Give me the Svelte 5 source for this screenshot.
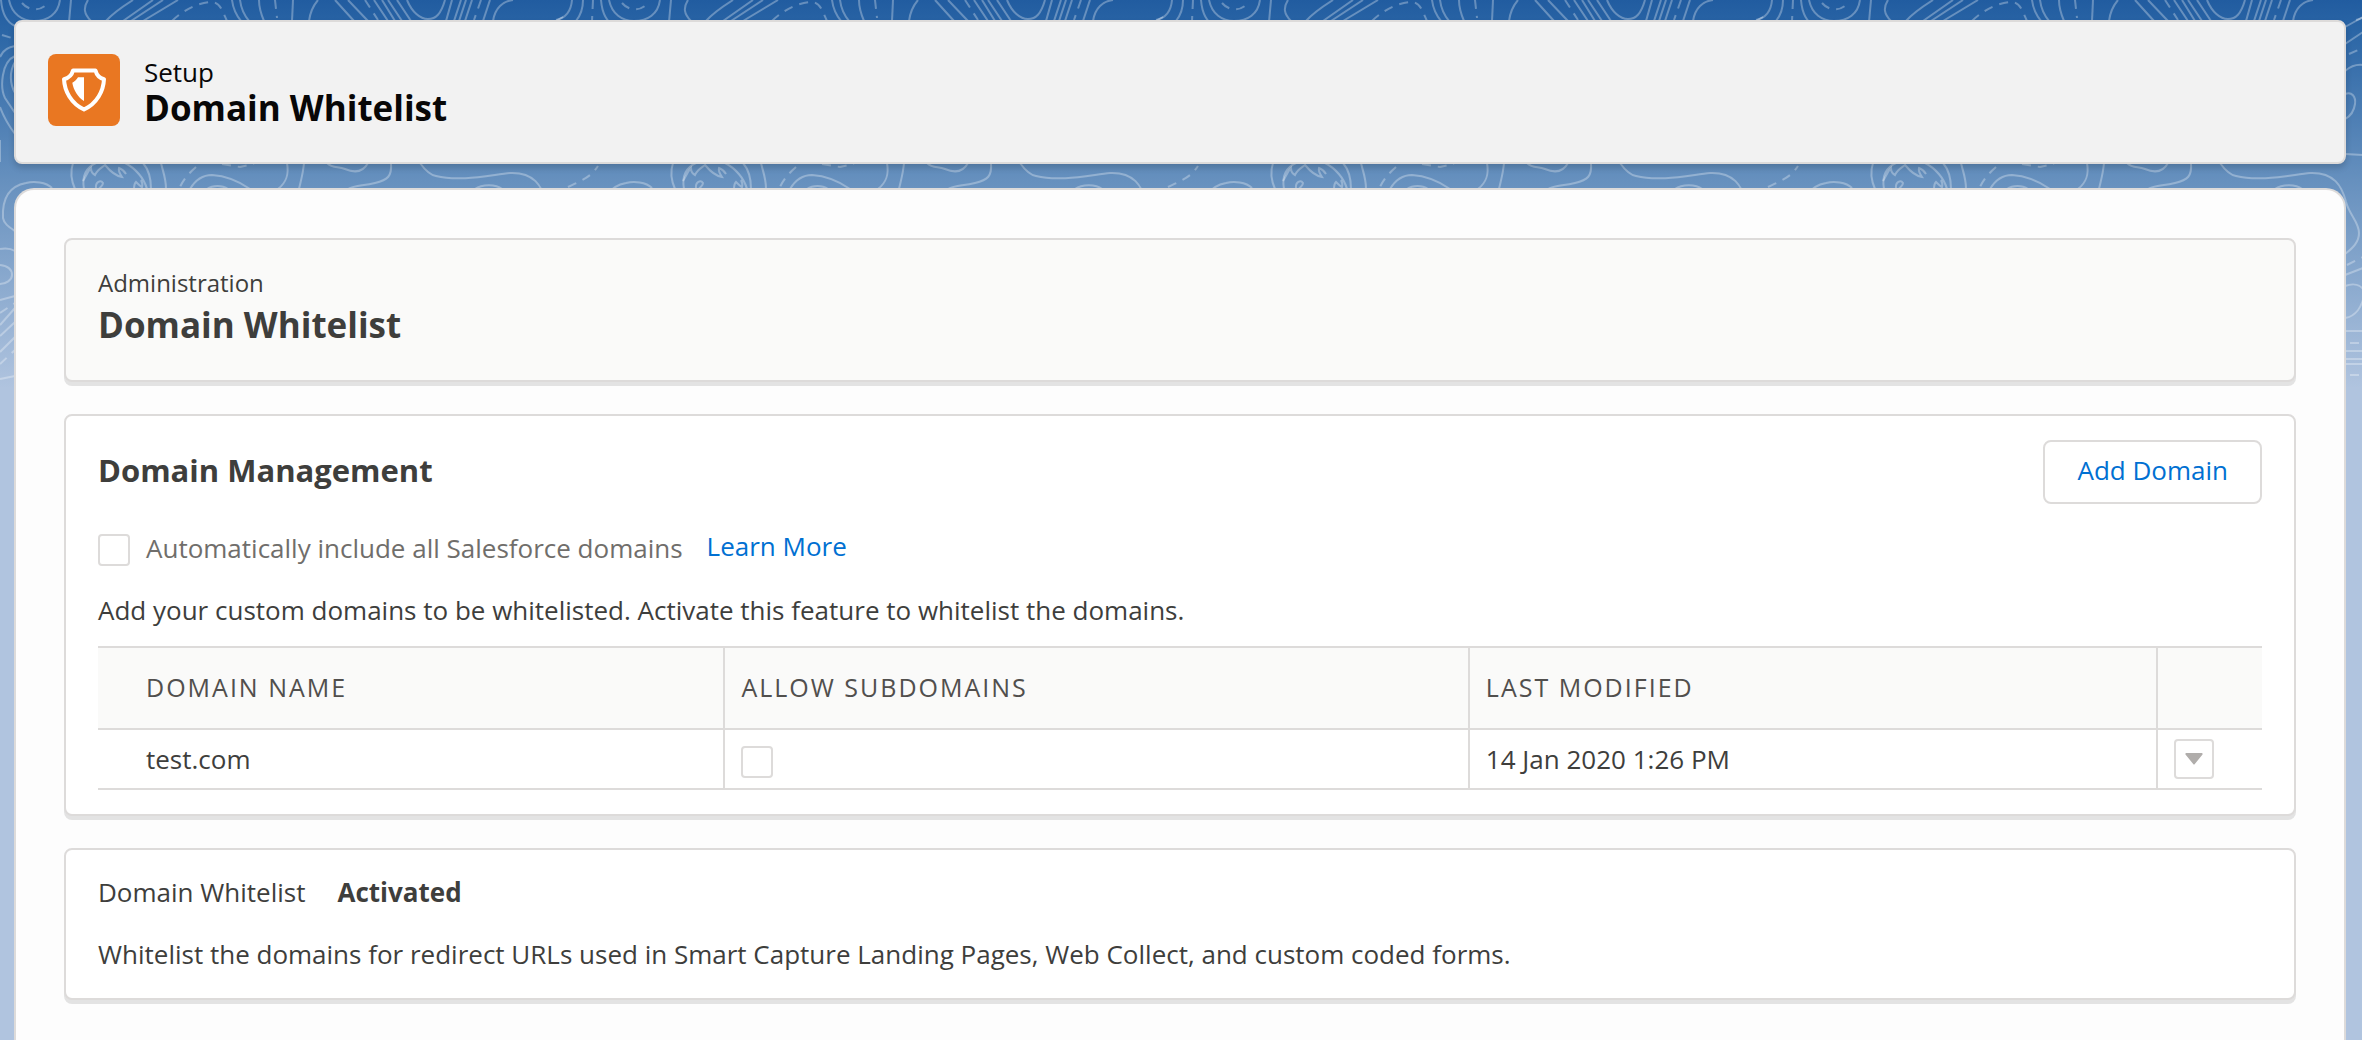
<script>
    let includeSalesforce = false;

    const columns = ['Domain Name', 'Allow Subdomains', 'Last Modified'];

    let domains = [
        { name: 'test.com', subdomains: false, modified: '14 Jan 2020 1:26 PM' }
    ];

    // Contour lines of the page backdrop, one 600px wide tile
    const contours = [
        'M1 0 C2 12 6 22 15 26',
        'M9 0 C12 14 22 21 34 21 C48 21 58 14 60 0',
        'M71 0 L69 22',
        'M88 0 C83 8 84 14 91 21',
        'M133 0 C122 7 114 12 106 21',
        'M153 0 L123 21 M163 0 L131 21 M178 0 L143 21',
        'M232 0 C233 8 236 15 241 21 M240 0 C241 8 244 15 249 21',
        'M259 0 C259 8 261 14 264 21',
        'M293 0 L292 21',
        'M318 0 C312 7 310 13 309 21',
        'M335 0 L354 21 M348 0 L368 21',
        'M374 0 L388 21 M382 0 L395 21 M388 0 L402 21 M397 0 L411 21',
        'M407 0 C412 12 420 19 428 19 S441 14 445 0',
        'M452 0 L446 21 M461 0 L454 21 M466 0 L459 21 M472 0 L465 21',
        'M490 0 L483 21',
        'M513 0 C503 1 495 8 493 21',
        'M572 0 C571 12 566 18 556 20',
        'M583 0 C583 8 580 16 576 21',
        'M601 0 C602 12 606 22 615 26',
        'M0 57 C3 50 8 47 15 46',
        'M15 56 C1 62 0 88 5 98 L15 113',
        'M15 62 C9 72 10 84 15 93',
        'M0 107 C4 118 9 126 15 134',
        'M0 140 V162',
        'M52 188 C46 182 34 181 26 183 C10 186 2 198 3 218 C4 224 9 227 15 231',
        'M0 249 C5 248 10 248 15 251',
        'M0 265 C8 266 12 270 12 275 S6 284 0 284',
        'M0 300 L15 296 M0 325 L15 308 M0 336 L15 322 M0 352 L15 337 M0 379 L15 376',
        'M73 163 C70 172 71 180 75 189',
        'M96 163 C85 168 82 178 84 189',
        'M83 181 C86 177 87 172 91 168 C91 171 93 174 95 175 C97 170 101 168 105 165 C110 171 115 176 122 177 C120 174 118 171 119 168 C122 169 124 171 126 174',
        'M134 189 C134 186 134 184 136 182 C138 184 140 186 142 187 C143 184 142 182 141 180',
        'M96 189 C95 181 101 180 103 183 C103 186 100 187 99 189',
        'M125 163 C135 168 144 178 147 189 M143 163 C149 170 151 180 151 189',
        'M161 163 C163 172 166 178 166 189',
        'M190 189 C196 179 204 175 212 175 C228 176 240 182 250 189',
        'M207 189 C213 185 222 185 228 189',
        'M287 163 C289 174 287 182 278 189',
        'M304 163 C303 174 301 180 299 189',
        'M327 163 C333 169 338 166 345 169 S362 174 368 163',
        'M391 163 C392 176 388 180 375 183 S355 185 348 189',
        'M420 163 C425 170 430 175 436 176 C460 182 490 175 510 173 C534 172 542 186 546 202 C550 216 559 222 559 233 C559 242 553 248 545 254',
        'M475 189 C482 184 496 184 502 189',
        'M545 27 L563 17 M545 44 L563 32',
        'M545 71 C551 66 556 64 563 65',
        'M545 94 C552 91 556 97 555 104 C554 111 551 116 545 119',
        'M545 154 L563 155',
        'M545 275 L563 268',
        'M545 286 C553 283 561 284 565 292 C562 308 556 316 545 318',
        'M545 331 H563 M545 351 H563 M545 359 H563 M545 364 H563'
    ];

    const dashed = [
        'M22 3 C28 10 38 12 46 5',
        'M172 21 C185 8 202 2 211 2 S222 10 227 21',
        'M275 0 L277 18',
        'M365 0 L378 20',
        'M481 0 L474 20',
        'M593 0 L592 21',
        'M2 35 L12 38',
        'M0 313 L15 303 M0 364 L15 350',
        'M196 167 C188 174 183 180 179 189',
        'M222 164 L240 167 L254 164',
        'M568 187 C582 180 590 178 598 166',
        'M549 54 L563 48',
        'M547 265 L563 257',
        'M550 343 H563 M550 375 H563'
    ];
</script>

<div class="page">
    <svg class="backdrop" aria-hidden="true">
        <defs>
            <linearGradient id="sky" x1="0" y1="0" x2="0" y2="1">
                <stop offset="0" stop-color="#215ca0" />
                <stop offset="0.08" stop-color="#2b66a6" />
                <stop offset="0.45" stop-color="#6690be" />
                <stop offset="0.97" stop-color="#b0c4df" />
            </linearGradient>
            <pattern id="contours" width="600" height="400" patternUnits="userSpaceOnUse">
                {#each contours as d}
                    <path {d} />
                {/each}
                {#each dashed as d}
                    <path {d} stroke-dasharray="9 7" />
                {/each}
            </pattern>
        </defs>
        <rect width="100%" height="400" fill="url(#sky)" />
        <rect width="100%" height="400" fill="url(#contours)" />
    </svg>

    <header class="setup-header">
        <svg class="setup-icon" viewBox="0 0 72 72" aria-hidden="true">
            <rect width="72" height="72" rx="8" fill="#e97722" />
            <path
                d="M25 16.5 H47.5 C48.5 20.5 51.5 24 56 25.2 C55.5 37 49 49.5 36 55.5 C23 49.5 16.5 37 16 25.2 C20.5 24 24 20.5 25 16.5 Z"
                fill="none"
                stroke="#fff"
                stroke-width="4"
                stroke-linejoin="round"
            />
            <path d="M36 23.3 H30 C28.5 26 26.5 27.5 24.3 28.8 C25.5 36 30 43.5 36 47 Z" fill="#fff" />
        </svg>
        <div>
            <p class="setup-label">Setup</p>
            <h1>Domain Whitelist</h1>
        </div>
    </header>

    <main>
        <section class="card card-title">
            <p class="eyebrow">Administration</p>
            <h2>Domain Whitelist</h2>
        </section>

        <section class="card">
            <div class="card-head">
                <h3>Domain Management</h3>
                <button type="button" class="add">Add Domain</button>
            </div>

            <div class="include">
                <label>
                    <input type="checkbox" bind:checked={includeSalesforce} />
                    <span>Automatically include all Salesforce domains</span>
                </label>
                <a href="#learn-more">Learn More</a>
            </div>

            <p class="hint">Add your custom domains to be whitelisted. Activate this feature to whitelist the domains.</p>

            <table>
                <colgroup>
                    <col class="col-name" />
                    <col class="col-sub" />
                    <col class="col-modified" />
                    <col class="col-actions" />
                </colgroup>
                <thead>
                    <tr>
                        {#each columns as column}
                            <th scope="col">{column}</th>
                        {/each}
                        <th scope="col" aria-label="Actions"></th>
                    </tr>
                </thead>
                <tbody>
                    {#each domains as domain}
                        <tr>
                            <td>{domain.name}</td>
                            <td>
                                <input type="checkbox" aria-label="Allow subdomains" bind:checked={domain.subdomains} />
                            </td>
                            <td>{domain.modified}</td>
                            <td>
                                <button type="button" class="row-menu" aria-label="Row actions">
                                    <svg viewBox="0 0 18 12" width="18" height="12" aria-hidden="true">
                                        <path d="M1 0 H17 Q18 0.5 17.5 1.5 L9.8 11 Q9 12 8.2 11 L0.5 1.5 Q0 0.5 1 0 Z" fill="#b0adab" />
                                    </svg>
                                </button>
                            </td>
                        </tr>
                    {/each}
                </tbody>
            </table>
        </section>

        <section class="card status">
            <p class="state"><span>Domain Whitelist</span><strong>Activated</strong></p>
            <p>Whitelist the domains for redirect URLs used in Smart Capture Landing Pages, Web Collect, and custom coded forms.</p>
        </section>
    </main>
</div>

<style>
    :global(body) {
        margin: 0;
        background: #b0c4df;
    }

    .page {
        position: relative;
        box-sizing: border-box;
        display: flex;
        flex-direction: column;
        gap: 24px;
        min-height: 100vh;
        padding: 20px 16px 0 14px;
        font-family: 'Open Sans', 'Noto Sans', sans-serif;
        font-size: 26px;
        line-height: 36px;
        color: #3e3e3c;
    }

    .backdrop {
        position: absolute;
        top: 0;
        left: 0;
        width: 100%;
        height: 400px;
    }

    .backdrop path {
        fill: none;
        stroke: #fff;
        stroke-width: 2;
        stroke-opacity: 0.3;
    }

    h1,
    h2,
    h3,
    p {
        margin: 0;
    }

    h1,
    h2 {
        font-size: 35px;
        line-height: 46px;
        font-weight: 700;
    }

    h3 {
        padding-bottom: 4px;
        font-size: 31px;
        line-height: 44px;
        font-weight: 700;
    }

    .setup-header {
        position: relative;
        display: flex;
        align-items: flex-start;
        gap: 24px;
        padding: 32px;
        border: 2px solid #dddbda;
        border-radius: 8px;
        background: #f2f2f2;
        box-shadow: 0 4px 6px rgba(0, 0, 0, 0.16);
        color: #080707;
    }

    .setup-icon {
        width: 72px;
        height: 72px;
    }

    .setup-header h1 {
        line-height: 36px;
        margin-bottom: 4px;
    }

    main {
        position: relative;
        flex: 1;
        display: flex;
        flex-direction: column;
        gap: 32px;
        padding: 48px 48px 36px;
        border: 2px solid #dddbda;
        border-bottom: 0;
        border-radius: 20px 20px 0 0;
        background: #fdfdfd;
    }

    .card {
        padding: 24px 32px;
        border: 2px solid #dddbda;
        border-radius: 8px;
        background: #fff;
        box-shadow: 0 4px 0 #e3e3e3;
    }

    .card-title {
        padding: 24px 32px 32px;
        background: #fafaf9;
    }

    .eyebrow {
        font-size: 24px;
        line-height: 38px;
    }

    .card-head {
        display: flex;
        align-items: center;
        justify-content: space-between;
    }

    .add {
        height: 64px;
        padding: 0 32px 4px;
        border: 2px solid #dddbda;
        border-radius: 8px;
        background: #fff;
        font: inherit;
        color: #0070d2;
    }

    a {
        color: #0070d2;
        text-decoration: none;
    }

    .include {
        display: flex;
        align-items: flex-start;
        gap: 24px;
        padding: 24px 0 22px;
    }

    .include label {
        display: flex;
        align-items: center;
        gap: 16px;
        padding-top: 2px;
        color: #706e6b;
    }

    .include span {
        padding-bottom: 4px;
    }

    input[type='checkbox'] {
        appearance: none;
        display: block;
        width: 32px;
        height: 32px;
        margin: 0;
        border: 2px solid #dddbda;
        border-radius: 4px;
        background: #fff;
    }

    input[type='checkbox']:checked {
        background: #0070d2;
    }

    td input[type='checkbox'] {
        margin-top: 6px;
    }

    .hint {
        padding-bottom: 18px;
    }

    table {
        width: 100%;
        table-layout: fixed;
        border-collapse: separate;
        border-spacing: 0;
        border-top: 2px solid #dddbda;
    }

    .col-name {
        width: 28.9%;
    }

    .col-modified {
        width: 31.8%;
    }

    .col-actions {
        width: 106px;
    }

    th,
    td {
        box-sizing: border-box;
        padding: 0 16px;
        border-bottom: 2px solid #dddbda;
        text-align: left;
    }

    th + th,
    td + td {
        border-left: 2px solid #dddbda;
    }

    th:first-child,
    td:first-child {
        padding-left: 48px;
    }

    th {
        height: 82px;
        padding-bottom: 2px;
        background: #fafaf9;
        font-size: 25px;
        font-weight: 400;
        letter-spacing: 2px;
        text-transform: uppercase;
        color: #514f4d;
    }

    td {
        height: 60px;
    }

    .row-menu {
        display: flex;
        align-items: center;
        justify-content: center;
        width: 40px;
        height: 40px;
        padding: 0;
        border: 2px solid #dddbda;
        border-radius: 4px;
        background: #fff;
    }

    .status {
        display: flex;
        flex-direction: column;
        gap: 26px;
        padding-bottom: 26px;
    }

    .state {
        display: flex;
        gap: 32px;
    }
</style>
